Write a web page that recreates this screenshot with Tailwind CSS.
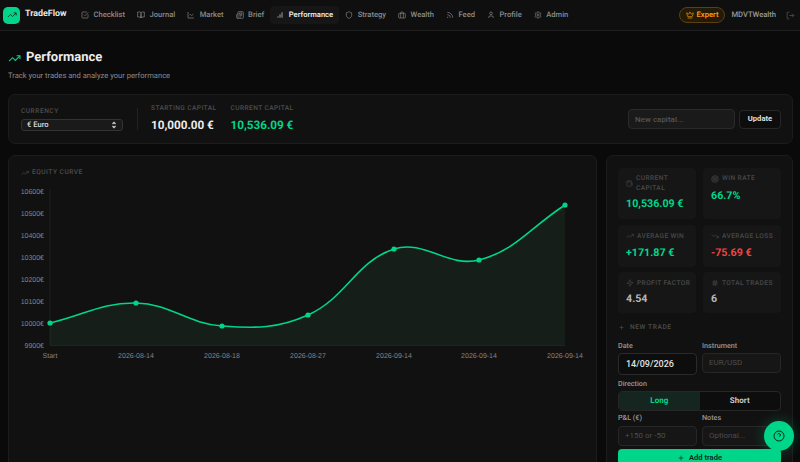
<!DOCTYPE html>
<html lang="en">
<head>
    <meta charset="UTF-8">
    <meta name="viewport" content="width=device-width, initial-scale=1.0">
    <script src="https://cdn.jsdelivr.net/npm/@tailwindcss/browser@4"></script>
    <title>Performance | TradeFlow</title>
</head>
<body class="bg-[#0a0a0a]">
    <svg class="hidden">
        <defs>
            <symbol id="i-trend" viewBox="0 0 24 24"><polyline points="22 7 13.5 15.5 8.5 10.5 2 17"/><polyline points="16 7 22 7 22 13"/></symbol>
            <symbol id="i-trend-down" viewBox="0 0 24 24"><polyline points="22 17 13.5 8.5 8.5 13.5 2 7"/><polyline points="16 17 22 17 22 11"/></symbol>
            <symbol id="i-check" viewBox="0 0 24 24"><path d="M21 10.5V19a2 2 0 0 1-2 2H5a2 2 0 0 1-2-2V5a2 2 0 0 1 2-2h12.5"/><path d="m9 11 3 3L22 4"/></symbol>
            <symbol id="i-book" viewBox="0 0 24 24"><path d="M2 3h6a4 4 0 0 1 4 4v14a3 3 0 0 0-3-3H2z"/><path d="M22 3h-6a4 4 0 0 0-4 4v14a3 3 0 0 1 3-3h7z"/></symbol>
            <symbol id="i-line" viewBox="0 0 24 24"><path d="M3 3v18h18"/><path d="m19 9-5 5-4-4-3 3"/></symbol>
            <symbol id="i-news" viewBox="0 0 24 24"><path d="M4 22h16a2 2 0 0 0 2-2V4a2 2 0 0 0-2-2H8a2 2 0 0 0-2 2v16a2 2 0 0 1-2 2Zm0 0a2 2 0 0 1-2-2v-9c0-1.1.9-2 2-2h2"/><path d="M18 14h-8"/><path d="M15 18h-5"/><path d="M10 6h8v4h-8V6Z"/></symbol>
            <symbol id="i-bars" viewBox="0 0 24 24"><line x1="12" y1="20" x2="12" y2="10"/><line x1="18" y1="20" x2="18" y2="4"/><line x1="6" y1="20" x2="6" y2="16"/></symbol>
            <symbol id="i-shield" viewBox="0 0 24 24"><path d="M20 13c0 5-3.5 7.5-7.66 8.95a1 1 0 0 1-.67-.01C7.5 20.5 4 18 4 13V6a1 1 0 0 1 1-1c2 0 4.5-1.2 6.24-2.72a1.17 1.17 0 0 1 1.52 0C14.51 3.81 17 5 19 5a1 1 0 0 1 1 1z"/></symbol>
            <symbol id="i-case" viewBox="0 0 24 24"><rect x="2" y="7" width="20" height="14" rx="2"/><path d="M16 21V5a2 2 0 0 0-2-2h-4a2 2 0 0 0-2 2v16"/></symbol>
            <symbol id="i-rss" viewBox="0 0 24 24"><path d="M4 11a9 9 0 0 1 9 9"/><path d="M4 4a16 16 0 0 1 16 16"/><circle cx="5" cy="19" r="1"/></symbol>
            <symbol id="i-user" viewBox="0 0 24 24"><path d="M19 21v-2a4 4 0 0 0-4-4H9a4 4 0 0 0-4 4v2"/><circle cx="12" cy="7" r="4"/></symbol>
            <symbol id="i-cog" viewBox="0 0 24 24"><path d="M12.22 2h-.44a2 2 0 0 0-2 2v.18a2 2 0 0 1-1 1.73l-.43.25a2 2 0 0 1-2 0l-.15-.08a2 2 0 0 0-2.73.73l-.22.38a2 2 0 0 0 .73 2.73l.15.1a2 2 0 0 1 1 1.72v.51a2 2 0 0 1-1 1.74l-.15.09a2 2 0 0 0-.73 2.73l.22.38a2 2 0 0 0 2.73.73l.15-.08a2 2 0 0 1 2 0l.43.25a2 2 0 0 1 1 1.73V20a2 2 0 0 0 2 2h.44a2 2 0 0 0 2-2v-.18a2 2 0 0 1 1-1.73l.43-.25a2 2 0 0 1 2 0l.15.08a2 2 0 0 0 2.73-.73l.22-.39a2 2 0 0 0-.73-2.73l-.15-.08a2 2 0 0 1-1-1.74v-.5a2 2 0 0 1 1-1.74l.15-.09a2 2 0 0 0 .73-2.73l-.22-.38a2 2 0 0 0-2.73-.73l-.15.08a2 2 0 0 1-2 0l-.43-.25a2 2 0 0 1-1-1.73V4a2 2 0 0 0-2-2z"/><circle cx="12" cy="12" r="3"/></symbol>
            <symbol id="i-crown" viewBox="0 0 24 24"><path d="M11.562 3.266a.5.5 0 0 1 .876 0L15.39 8.87a1 1 0 0 0 1.516.294L21.183 5.5a.5.5 0 0 1 .798.519l-2.834 10.246a1 1 0 0 1-.956.734H5.81a1 1 0 0 1-.957-.734L2.02 6.02a.5.5 0 0 1 .798-.519l4.276 3.664a1 1 0 0 0 1.516-.294z"/><path d="M5 21h14"/></symbol>
            <symbol id="i-logout" viewBox="0 0 24 24"><path d="M9 21H5a2 2 0 0 1-2-2V5a2 2 0 0 1 2-2h4"/><polyline points="16 17 21 12 16 7"/><line x1="21" y1="12" x2="9" y2="12"/></symbol>
            <symbol id="i-wallet" viewBox="0 0 24 24"><path d="M19 7V4a1 1 0 0 0-1-1H5a2 2 0 0 0 0 4h15a1 1 0 0 1 1 1v4h-3a2 2 0 0 0 0 4h3a1 1 0 0 0 1-1v-2a1 1 0 0 0-1-1"/><path d="M3 5v14a2 2 0 0 0 2 2h15a1 1 0 0 0 1-1v-4"/></symbol>
            <symbol id="i-target" viewBox="0 0 24 24"><circle cx="12" cy="12" r="10"/><circle cx="12" cy="12" r="6"/><circle cx="12" cy="12" r="2"/></symbol>
            <symbol id="i-zap" viewBox="0 0 24 24"><path d="M13 2 3 14h9l-1 8 10-12h-9l1-8z"/></symbol>
            <symbol id="i-hash" viewBox="0 0 24 24"><line x1="4" y1="9" x2="20" y2="9"/><line x1="4" y1="15" x2="20" y2="15"/><line x1="10" y1="3" x2="8" y2="21"/><line x1="16" y1="3" x2="14" y2="21"/></symbol>
            <symbol id="i-plus" viewBox="0 0 24 24"><path d="M5 12h14"/><path d="M12 5v14"/></symbol>
            <symbol id="i-help" viewBox="0 0 24 24"><circle cx="12" cy="12" r="10"/><path d="M9.09 9a3 3 0 0 1 5.83 1c0 2-3 3-3 3"/><path d="M12 17h.01"/></symbol>
        </defs>
    </svg>

    <div class="relative h-[462px] overflow-hidden font-['Roboto',sans-serif] text-white [text-rendering:geometricPrecision]">
        <header class="h-[31px] bg-[#0f0f0f] border-b border-[#1f1f1f] flex items-center justify-between pl-[3px] pr-[5px]">
            <div class="flex items-center">
                <div class="w-[17px] h-[17px] rounded-[5px] bg-[#00d68a] flex items-center justify-center mr-[5px]">
                    <svg class="w-[10px] h-[10px] fill-none stroke-[#06281c] stroke-2"><use href="#i-trend"/></svg>
                </div>
                <span class="text-[8.9px] font-bold w-[50px] text-[#e6e6e6]">TradeFlow</span>
                <nav class="flex items-center text-[7.6px] font-medium text-[#8a8a8a]">
                    <a class="flex items-center gap-[4.5px] px-[6px] h-[18px]"><svg class="w-[8px] h-[8px] fill-none stroke-current stroke-2"><use href="#i-check"/></svg>Checklist</a>
                    <a class="flex items-center gap-[4.5px] px-[6px] h-[18px]"><svg class="w-[8px] h-[8px] fill-none stroke-current stroke-2"><use href="#i-book"/></svg>Journal</a>
                    <a class="flex items-center gap-[4.5px] px-[6px] h-[18px]"><svg class="w-[8px] h-[8px] fill-none stroke-current stroke-2"><use href="#i-line"/></svg>Market</a>
                    <a class="flex items-center gap-[4.5px] px-[6px] h-[18px]"><svg class="w-[8px] h-[8px] fill-none stroke-current stroke-2"><use href="#i-news"/></svg>Brief</a>
                    <a class="flex items-center gap-[4.5px] px-[6px] h-[18px] rounded-[4px] bg-[#161616] text-[#e8e8e8] font-semibold"><svg class="w-[8px] h-[8px] fill-none stroke-current stroke-2"><use href="#i-bars"/></svg>Performance</a>
                    <a class="flex items-center gap-[4.5px] px-[6px] h-[18px]"><svg class="w-[8px] h-[8px] fill-none stroke-current stroke-2"><use href="#i-shield"/></svg>Strategy</a>
                    <a class="flex items-center gap-[4.5px] px-[6px] h-[18px]"><svg class="w-[8px] h-[8px] fill-none stroke-current stroke-2"><use href="#i-case"/></svg>Wealth</a>
                    <a class="flex items-center gap-[4.5px] px-[6px] h-[18px]"><svg class="w-[8px] h-[8px] fill-none stroke-current stroke-2"><use href="#i-rss"/></svg>Feed</a>
                    <a class="flex items-center gap-[4.5px] px-[6px] h-[18px]"><svg class="w-[8px] h-[8px] fill-none stroke-current stroke-2"><use href="#i-user"/></svg>Profile</a>
                    <a class="flex items-center gap-[4.5px] px-[6px] h-[18px]"><svg class="w-[8px] h-[8px] fill-none stroke-current stroke-2"><use href="#i-cog"/></svg>Admin</a>
                </nav>
            </div>
            <div class="flex items-center">
                <span class="flex items-center gap-[3px] h-[16px] px-[6px] rounded-full border border-[#5a3f10] bg-[#241a08] text-[#f59e0b] text-[7.6px] font-semibold"><svg class="w-[8px] h-[8px] fill-none stroke-current stroke-2"><use href="#i-crown"/></svg>Expert</span>
                <span class="ml-[6px] text-[7.6px] font-medium text-[#9a9a9a]">MDVTWealth</span>
                <svg class="ml-[10px] w-[9px] h-[9px] fill-none stroke-[#555] stroke-2"><use href="#i-logout"/></svg>
            </div>
        </header>

        <main class="pl-[8px] pr-[7px]">
            <div class="pt-[18px]">
                <div class="flex items-center gap-[5px]">
                    <svg class="w-[13px] h-[13px] fill-none stroke-[#00d68a] stroke-2"><use href="#i-trend"/></svg>
                    <h1 class="text-[13px] leading-[18px] font-bold text-[#ececec]">Performance</h1>
                </div>
                <p class="text-[7.6px] leading-[12px] mt-[2.5px] text-[#8a8a8a]">Track your trades and analyze your performance</p>
            </div>

            <section class="mt-[12.5px] h-[50px] rounded-[7px] bg-[#111111] border border-[#1c1c1c] flex items-center justify-between pl-[12px] pr-[11px]">
                <div class="flex items-center">
                    <div class="w-[102px]">
                        <p class="text-[6.6px] leading-[9px] tracking-[0.5px] text-[#4d4d4d] font-medium">CURRENCY</p>
                        <div class="mt-[3px] h-[12px] rounded-[3px] bg-[#1a1a1a] border border-[#333] flex items-center justify-between px-[5px] text-[7.6px] font-medium text-[#dcdcdc]">
                            <span>€ Euro</span>
                            <svg class="w-[6px] h-[8px] fill-none stroke-[#ccc] stroke-[2.5]" viewBox="0 0 12 16"><path d="M3 6l3-3 3 3"/><path d="M3 10l3 3 3-3"/></svg>
                        </div>
                    </div>
                    <div class="ml-[14px] w-px h-[22px] bg-[#222]"></div>
                    <div class="ml-[13px] w-[79.5px]">
                        <p class="text-[6.6px] leading-[9px] tracking-[0.4px] text-[#4d4d4d] font-medium whitespace-nowrap">STARTING CAPITAL</p>
                        <p class="mt-[4px] text-[11.7px] leading-[17px] font-bold text-[#ededed] whitespace-nowrap">10,000.00 €</p>
                    </div>
                    <div>
                        <p class="text-[6.6px] leading-[9px] tracking-[0.4px] text-[#4d4d4d] font-medium whitespace-nowrap">CURRENT CAPITAL</p>
                        <p class="mt-[4px] text-[11.7px] leading-[17px] font-bold text-[#00d68a] whitespace-nowrap">10,536.09 €</p>
                    </div>
                </div>
                <div class="flex items-center gap-[4px]">
                    <input placeholder="New capital..." class="w-[107px] h-[20px] rounded-[4px] bg-[#1a1a1a] border border-[#2a2a2a] px-[6px] text-[8px] font-medium placeholder:text-[#555]">
                    <button class="w-[42px] h-[19px] rounded-[4px] bg-[#0d0d0d] border border-[#262626] text-[7.6px] font-bold text-[#e0e0e0]">Update</button>
                </div>
            </section>

            <div class="mt-[11px] flex gap-[9px] items-stretch">
                <section class="w-[589px] rounded-[7px] bg-[#111111] border border-[#1c1c1c] pt-[12px] pl-[11px]">
                    <div class="flex items-center gap-[3px] pl-[1px] text-[#4d4d4d] text-[6.6px] leading-[9px] tracking-[0.5px] font-medium">
                        <svg class="w-[8px] h-[8px] fill-none stroke-current stroke-2"><use href="#i-trend"/></svg>
                        EQUITY CURVE
                    </div>
                    <svg class="block mt-[6px]" width="570" height="190" viewBox="20 183 570 190" font-family="'Liberation Sans', sans-serif" font-size="7" fill="#858585">
                        <line x1="50" y1="189" x2="50" y2="345.5" stroke="#1e1e1e"/>
                        <line x1="50" y1="345.5" x2="565" y2="345.5" stroke="#1e1e1e"/>
                        <g text-anchor="end">
                            <text x="44" y="193.5">10600€</text>
                            <text x="44" y="215.5">10500€</text>
                            <text x="44" y="237.5">10400€</text>
                            <text x="44" y="259.5">10300€</text>
                            <text x="44" y="281.5">10200€</text>
                            <text x="44" y="303.5">10100€</text>
                            <text x="44" y="325.5">10000€</text>
                            <text x="44" y="347.5">9900€</text>
                        </g>
                        <g text-anchor="middle">
                            <text x="50" y="358">Start</text>
                            <text x="136" y="358">2026-08-14</text>
                            <text x="222" y="358">2026-08-18</text>
                            <text x="308" y="358">2026-08-27</text>
                            <text x="394" y="358">2026-09-14</text>
                            <text x="479" y="358">2026-09-14</text>
                            <text x="565" y="358">2026-09-14</text>
                        </g>
                        <path fill="#60d0a0" fill-opacity="0.07" d="M50 323C84.4 315 101.7 302.4 136 303C170.5 303.6 187.1 323.6 222 326C255.9 328.4 277.4 328.7 308 315C346.2 297.9 355.9 261.3 394 249C424.3 239.3 447.9 268 479 260C516.3 250.4 530.6 227 565 205V345.5H50Z"/>
                        <path fill="none" stroke="#00d68a" stroke-width="1.6" d="M50 323C84.4 315 101.7 302.4 136 303C170.5 303.6 187.1 323.6 222 326C255.9 328.4 277.4 328.7 308 315C346.2 297.9 355.9 261.3 394 249C424.3 239.3 447.9 268 479 260C516.3 250.4 530.6 227 565 205"/>
                        <g fill="#00d68a">
                            <circle cx="50" cy="323" r="2.6"/>
                            <circle cx="136" cy="303" r="2.6"/>
                            <circle cx="222" cy="326" r="2.6"/>
                            <circle cx="308" cy="315" r="2.6"/>
                            <circle cx="394" cy="249" r="2.6"/>
                            <circle cx="479" cy="260" r="2.6"/>
                            <circle cx="565" cy="205" r="2.6"/>
                        </g>
                    </svg>
                </section>

                <aside class="w-[187px] rounded-[7px] bg-[#111111] border border-[#1c1c1c] pt-[12px] px-[11px]">
                    <div class="grid grid-cols-2 gap-x-[7px] gap-y-[5.5px]">
                        <div class="h-[51px] rounded-[4px] bg-[#161616] pl-[8px] pr-[3px] pt-[6px]">
                            <div class="flex items-center gap-[3px] text-[#484848] text-[6.6px] leading-[9.5px] tracking-[0.4px] font-medium">
                                <svg class="w-[7px] h-[7px] shrink-0 fill-none stroke-current stroke-2"><use href="#i-wallet"/></svg>
                                <span>CURRENT CAPITAL</span>
                            </div>
                            <p class="mt-[4px] text-[10.7px] leading-[14px] font-bold text-[#00d68a] whitespace-nowrap">10,536.09 €</p>
                        </div>
                        <div class="h-[51px] rounded-[4px] bg-[#161616] pl-[8px] pr-[3px] pt-[6px]">
                            <div class="flex items-center gap-[3px] text-[#484848] text-[6.6px] leading-[9.5px] tracking-[0.4px] font-medium">
                                <svg class="w-[8px] h-[8px] shrink-0 fill-none stroke-current stroke-2"><use href="#i-target"/></svg>
                                <span>WIN RATE</span>
                            </div>
                            <p class="mt-[5.5px] text-[10.7px] leading-[14px] font-bold text-[#00d68a]">66.7%</p>
                        </div>
                        <div class="h-[42px] rounded-[4px] bg-[#161616] pl-[8px] pr-[3px] pt-[6px]">
                            <div class="flex items-center gap-[3px] text-[#484848] text-[6.6px] leading-[10px] tracking-[0.4px] font-medium whitespace-nowrap">
                                <svg class="w-[8px] h-[8px] shrink-0 fill-none stroke-current stroke-2"><use href="#i-trend"/></svg>
                                <span>AVERAGE WIN</span>
                            </div>
                            <p class="mt-[5px] text-[10.7px] leading-[14px] font-bold text-[#00d68a]">+171.87 €</p>
                        </div>
                        <div class="h-[42px] rounded-[4px] bg-[#161616] pl-[8px] pr-[3px] pt-[6px]">
                            <div class="flex items-center gap-[3px] text-[#484848] text-[6.6px] leading-[10px] tracking-[0.4px] font-medium whitespace-nowrap">
                                <svg class="w-[8px] h-[8px] shrink-0 fill-none stroke-current stroke-2"><use href="#i-trend-down"/></svg>
                                <span>AVERAGE LOSS</span>
                            </div>
                            <p class="mt-[5px] text-[10.7px] leading-[14px] font-bold text-[#ef4444]">-75.69 €</p>
                        </div>
                        <div class="h-[41px] rounded-[4px] bg-[#161616] pl-[8px] pr-[3px] pt-[6px]">
                            <div class="flex items-center gap-[3px] text-[#484848] text-[6.6px] leading-[10px] tracking-[0.4px] font-medium whitespace-nowrap">
                                <svg class="w-[8px] h-[8px] shrink-0 fill-none stroke-current stroke-2"><use href="#i-zap"/></svg>
                                <span>PROFIT FACTOR</span>
                            </div>
                            <p class="mt-[4px] text-[10.7px] leading-[14px] font-bold text-[#b8b8b8]">4.54</p>
                        </div>
                        <div class="h-[41px] rounded-[4px] bg-[#161616] pl-[8px] pr-[3px] pt-[6px]">
                            <div class="flex items-center gap-[3px] text-[#484848] text-[6.6px] leading-[10px] tracking-[0.4px] font-medium whitespace-nowrap">
                                <svg class="w-[8px] h-[8px] shrink-0 fill-none stroke-current stroke-2"><use href="#i-hash"/></svg>
                                <span>TOTAL TRADES</span>
                            </div>
                            <p class="mt-[4px] text-[10.7px] leading-[14px] font-bold text-[#b8b8b8]">6</p>
                        </div>
                    </div>

                    <div class="mt-[9.5px] flex items-center gap-[5px] text-[#4d4d4d] text-[6.6px] leading-[9px] tracking-[0.6px] font-medium">
                        <svg class="w-[7px] h-[7px] fill-none stroke-current stroke-2"><use href="#i-plus"/></svg>
                        NEW TRADE
                    </div>

                    <div class="mt-[9px] grid grid-cols-2 gap-x-[5px]">
                        <div>
                            <p class="text-[7.2px] leading-[10px] font-medium text-[#999]">Date</p>
                            <input value="14/09/2026" class="block mt-[2px] w-full h-[22px] rounded-[4px] bg-[#0d0d0d] border border-[#2a2a2a] px-[7px] text-[9px] font-medium text-[#e0e0e0]">
                        </div>
                        <div>
                            <p class="text-[7.2px] leading-[10px] font-medium text-[#999]">Instrument</p>
                            <input placeholder="EUR/USD" class="block mt-[2px] w-full h-[20px] rounded-[4px] bg-[#161616] border border-[#262626] px-[6px] text-[8px] placeholder:text-[#4d4d4d]">
                        </div>
                    </div>

                    <p class="mt-[4px] text-[7.2px] leading-[10px] font-medium text-[#999]">Direction</p>
                    <div class="mt-[2px] h-[20px] rounded-[4px] border border-[#262626] bg-[#0d0d0d] flex text-[8px] font-bold overflow-hidden">
                        <span class="w-1/2 flex items-center justify-center bg-[#14261f] text-[#00d68a]">Long</span>
                        <span class="w-1/2 flex items-center justify-center text-[#c8c8c8]">Short</span>
                    </div>

                    <div class="mt-[2px] grid grid-cols-2 gap-x-[5px]">
                        <div>
                            <p class="text-[7.2px] leading-[10px] font-medium text-[#999]">P&amp;L (€)</p>
                            <input placeholder="+150 or -50" class="block mt-[3px] w-full h-[20px] rounded-[4px] bg-[#161616] border border-[#262626] px-[6px] text-[8px] placeholder:text-[#4d4d4d]">
                        </div>
                        <div>
                            <p class="text-[7.2px] leading-[10px] font-medium text-[#999]">Notes</p>
                            <input placeholder="Optional..." class="block mt-[3px] w-full h-[20px] rounded-[4px] bg-[#161616] border border-[#262626] px-[6px] text-[8px] placeholder:text-[#4d4d4d]">
                        </div>
                    </div>

                    <button class="mt-[3px] w-full h-[19px] rounded-[4px] bg-[#00d68a] flex items-center justify-center gap-[4px] text-[7.6px] font-semibold text-[#06281c]">
                        <svg class="w-[8px] h-[8px] fill-none stroke-current stroke-2"><use href="#i-plus"/></svg>
                        Add trade
                    </button>
                    <div class="h-[12px]"></div>
                </aside>
            </div>
        </main>

        <button class="absolute left-[764px] top-[421px] w-[30px] h-[30px] rounded-full bg-[#00d68a] flex items-center justify-center shadow-[0_0_14px_rgba(0,214,138,0.3)]">
            <svg class="w-[12px] h-[12px] fill-none stroke-[#06281c] stroke-2"><use href="#i-help"/></svg>
        </button>
    </div>
</body>
</html>
